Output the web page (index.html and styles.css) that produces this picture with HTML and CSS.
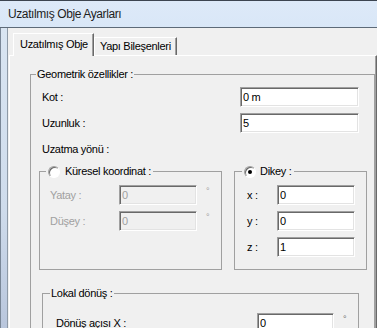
FILE: index.html
```html
<!DOCTYPE html>
<html lang="tr">
<head>
    <meta charset="UTF-8">
    <meta name="viewport" content="width=device-width, initial-scale=1.0">
    <title>Uzatılmış Obje Ayarları</title>
    <link rel="stylesheet" href="styles.css">
</head>
<body>
<div class="window">
    <div class="titlebar">Uzatılmış Obje Ayarları</div>
    <div class="window-body">
        <div class="frame-left"></div>
        <div class="client">
            <div class="tabs">
                <div class="tab active">Uzatılmış Obje</div>
                <div class="tab">Yapı Bileşenleri</div>
            </div>
            <div class="tab-panel">
                <fieldset class="group group-main">
                    <legend>Geometrik özellikler :</legend>
                    <div class="main-body">
                        <div class="row row-main">
                            <label class="lbl">Kot :</label>
                            <input class="field" type="text" value="0 m">
                        </div>
                        <div class="row row-main">
                            <label class="lbl">Uzunluk :</label>
                            <input class="field" type="text" value="5">
                        </div>
                        <div class="caption">Uzatma yönü :</div>
                        <div class="subgroups">
                            <fieldset class="group group-global">
                                <legend class="radio-legend">
                                    <span class="radio"></span>
                                    <span>Küresel koordinat :</span>
                                </legend>
                                <div class="global-body">
                                    <div class="row disabled">
                                        <label class="lbl">Yatay :</label>
                                        <input class="field" type="text" value="0" disabled>
                                        <span class="deg">°</span>
                                    </div>
                                    <div class="row disabled">
                                        <label class="lbl">Düşey :</label>
                                        <input class="field" type="text" value="0" disabled>
                                        <span class="deg">°</span>
                                    </div>
                                </div>
                            </fieldset>
                            <fieldset class="group group-vertical">
                                <legend class="radio-legend">
                                    <span class="radio checked"></span>
                                    <span>Dikey :</span>
                                </legend>
                                <div class="vertical-body">
                                    <div class="row">
                                        <label class="lbl">x :</label>
                                        <input class="field" type="text" value="0">
                                    </div>
                                    <div class="row">
                                        <label class="lbl">y :</label>
                                        <input class="field" type="text" value="0">
                                    </div>
                                    <div class="row">
                                        <label class="lbl">z :</label>
                                        <input class="field" type="text" value="1">
                                    </div>
                                </div>
                            </fieldset>
                        </div>
                        <fieldset class="group group-local">
                            <legend>Lokal dönüş :</legend>
                            <div class="local-body">
                                <div class="row">
                                    <label class="lbl">Dönüş açısı X :</label>
                                    <input class="field" type="text" value="0">
                                    <span class="deg">°</span>
                                </div>
                            </div>
                        </fieldset>
                    </div>
                </fieldset>
            </div>
        </div>
    </div>
</div>
</body>
</html>
```

FILE: styles.css
```css
body {
    margin: 0;
    background-color: #f0f0f0;
    font-family: "Liberation Sans", Arial, sans-serif;
    font-size: 11px;
    letter-spacing: -0.3px;
    color: #000;
}
.window {
    width: 377px;
    height: 328px;
    overflow: hidden;
    display: flex;
    flex-direction: column;
}
.titlebar {
    height: 28px;
    box-sizing: border-box;
    border-top: 1px solid #3c4450;
    border-bottom: 1px solid #5d6a78;
    background: linear-gradient(#dde9f8, #d9e7f7);
    padding: 4px 0 0 8px;
    font-size: 12px;
    line-height: 18px;
    letter-spacing: -0.4px;
    color: #1e1e1e;
}
.window-body {
    flex: 1;
    display: flex;
    min-height: 0;
}
.frame-left {
    width: 8px;
    box-sizing: border-box;
    border-left: 1px solid #7a8797;
    border-right: 1px solid #8e9aa7;
    background: linear-gradient(#d9e5f2, #cfdcec 60%, #b9c6dc);
}
.client {
    flex: 1;
    display: flex;
    flex-direction: column;
}
.tabs {
    display: flex;
    align-items: flex-end;
    margin: 5px 0 -1px 5px;
    position: relative;
    z-index: 1;
}
.tab {
    box-sizing: border-box;
    height: 18px;
    width: 83px;
    margin-bottom: 1px;
    padding: 2px 0 0 5px;
    line-height: 13px;
    border: 1px solid #fff;
    border-right-color: #696969;
    border-bottom: none;
    box-shadow: inset -1px 0 #a0a0a0;
    background-color: #f0f0f0;
}
.tab.active {
    height: 23px;
    width: 81px;
    margin-bottom: 0;
    padding: 4px 0 0 6px;
}
.tab-panel {
    flex: 1;
    margin-left: 1px;
    border: 1px solid #fff;
    border-right-color: #696969;
    border-bottom-color: #696969;
    box-shadow: inset -1px 0 #a0a0a0;
}
.group {
    margin: 0;
    padding: 0;
    min-width: 0;
    border: 1px solid #a0a0a0;
}
.group legend {
    padding: 0 1px;
    line-height: 13px;
}
.group-main {
    margin: 12px 1px 0 20px;
}
.group-main > legend {
    margin-left: 5px;
}
.main-body {
    padding-top: 6px;
}
.row {
    display: flex;
    align-items: center;
    height: 20px;
}
.row + .row {
    margin-top: 6px;
}
.row-main {
    padding-left: 11px;
}
.row-main .lbl {
    width: 198px;
}
.row-main .field {
    width: 119px;
}
.field {
    box-sizing: border-box;
    height: 20px;
    margin: 0;
    padding: 0 2px;
    font-family: inherit;
    font-size: 11px;
    letter-spacing: -0.3px;
    color: #000;
    background-color: #fff;
    border: 1px solid;
    border-color: #a0a0a0 #fff #fff #a0a0a0;
    box-shadow: inset 1px 1px 0 #696969, inset -1px -1px 0 #e3e3e3;
    outline: none;
}
.field:disabled {
    background-color: #f0f0f0;
    color: #a0a0a0;
}
.disabled .lbl {
    color: #a0a0a0;
}
.deg {
    align-self: flex-start;
    margin: 1px 0 0 9px;
    font-size: 9px;
    color: #6d6d6d;
}
.disabled .deg {
    color: #a0a0a0;
}
.caption {
    margin-top: 10px;
    padding-left: 11px;
    line-height: 13px;
}
.subgroups {
    display: flex;
    margin: 9px 0 0 8px;
}
.radio-legend {
    display: flex;
    align-items: center;
}
.group .radio-legend {
    padding: 0 2px;
}
.radio {
    width: 12px;
    height: 12px;
    box-sizing: border-box;
    border-radius: 50%;
    border: 1px solid;
    border-color: #a0a0a0 #fff #fff #a0a0a0;
    box-shadow: inset 1px 1px 0 #696969;
    background-color: #fff;
    display: flex;
    align-items: center;
    justify-content: center;
    margin-right: 5px;
}
.radio.checked::after {
    content: "";
    width: 4px;
    height: 4px;
    border-radius: 50%;
    background-color: #000;
}
.group-global {
    width: 181px;
}
.group-global > legend {
    margin-left: 6px;
}
.global-body {
    padding: 7px 0 0 10px;
}
.global-body .lbl {
    width: 69px;
}
.global-body .field {
    width: 78px;
}
.group-vertical {
    width: 131px;
    margin-left: 12px;
}
.group-vertical > legend {
    margin-left: 7px;
}
.group-vertical .radio {
    margin-right: 4px;
}
.vertical-body {
    padding: 7px 0 12px 12px;
}
.vertical-body .lbl {
    width: 30px;
}
.vertical-body .field {
    width: 78px;
}
.group-local {
    margin: 17px 15px 0 11px;
}
.group-local > legend {
    margin-left: 7px;
}
.local-body {
    padding: 13px 0 0 13px;
}
.local-body .lbl {
    width: 201px;
}
.local-body .field {
    width: 77px;
}
```
